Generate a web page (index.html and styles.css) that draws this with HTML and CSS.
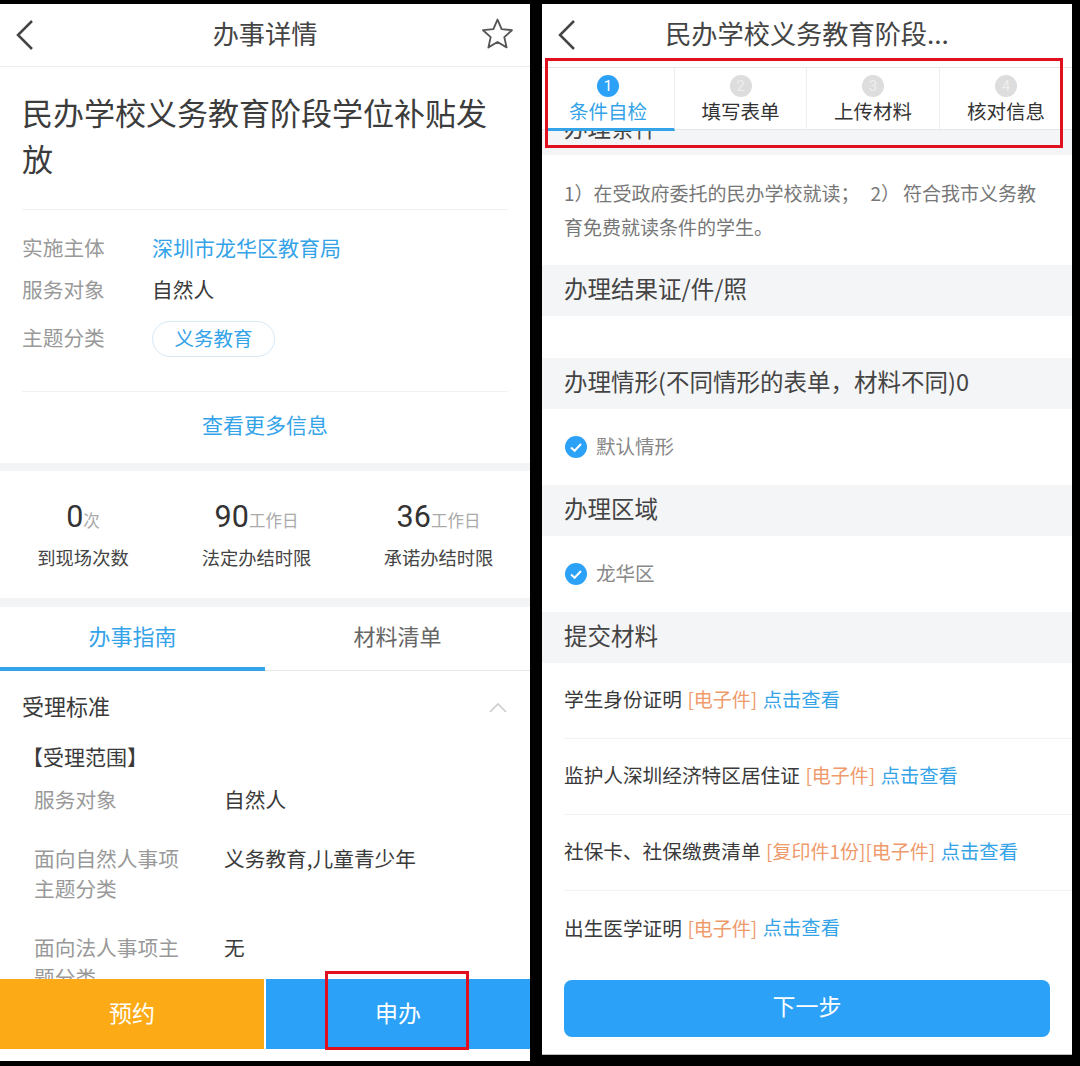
FILE: index.html
```html
<!DOCTYPE html>
<html lang="zh-CN">
<head>
  <meta charset="UTF-8">
  <meta name="viewport" content="width=device-width, initial-scale=1.0">
  <title>办事详情</title>
  <link rel="stylesheet" href="styles.css">
</head>
<body>
  <!-- Left screen -->
  <div class="phone phone-left">
    <div class="header">
      <svg class="back" viewBox="0 0 20 32"><path d="M17 2 L3 16 L17 30"/></svg>
      <h2 class="header-title">办事详情</h2>
      <svg class="star" viewBox="0 0 32 32"><path d="M16 2.5 L20 11.8 L30 12.8 L22.6 19.5 L24.8 29.5 L16 24.3 L7.2 29.5 L9.4 19.5 L2 12.8 L12 11.8 Z"/></svg>
    </div>

    <div class="content">
      <div class="intro">
        <h1 class="main-title">民办学校义务教育阶段学位补贴发放</h1>
        <div class="meta">
          <div class="meta-row"><span class="meta-label">实施主体</span><span class="link">深圳市龙华区教育局</span></div>
          <div class="meta-row"><span class="meta-label">服务对象</span><span>自然人</span></div>
          <div class="meta-row meta-row-tag"><span class="meta-label">主题分类</span><span class="tag">义务教育</span></div>
        </div>
        <div class="more link">查看更多信息</div>
      </div>

      <div class="stats">
        <div class="stat">
          <div class="stat-num">0<small>次</small></div>
          <div class="stat-label">到现场次数</div>
        </div>
        <div class="stat">
          <div class="stat-num">90<small>工作日</small></div>
          <div class="stat-label">法定办结时限</div>
        </div>
        <div class="stat">
          <div class="stat-num">36<small>工作日</small></div>
          <div class="stat-label">承诺办结时限</div>
        </div>
      </div>

      <div class="tabs">
        <div class="tab active">办事指南</div>
        <div class="tab">材料清单</div>
      </div>

      <div class="guide-head">
        <span>受理标准</span>
        <svg class="chevron" viewBox="0 0 20 12"><path d="M2 10 L10 2 L18 10"/></svg>
      </div>
      <div class="guide-sub">【受理范围】</div>
      <div class="guide-row"><div class="guide-label">服务对象</div><div>自然人</div></div>
      <div class="guide-row"><div class="guide-label">面向自然人事项主题分类</div><div>义务教育,儿童青少年</div></div>
      <div class="guide-row"><div class="guide-label">面向法人事项主题分类</div><div>无</div></div>
    </div>

    <div class="actions">
      <div class="action action-orange">预约</div>
      <div class="action action-blue">申办</div>
    </div>
    <div class="mark mark-apply"></div>
  </div>

  <!-- Right screen -->
  <div class="phone phone-right">
    <div class="header header-plain">
      <svg class="back" viewBox="0 0 20 32"><path d="M17 2 L3 16 L17 30"/></svg>
      <h2 class="header-title">民办学校义务教育阶段...</h2>
    </div>

    <div class="steps">
      <div class="step current"><span class="step-num">1</span><span>条件自检</span></div>
      <div class="step"><span class="step-num">2</span><span>填写表单</span></div>
      <div class="step"><span class="step-num">3</span><span>上传材料</span></div>
      <div class="step"><span class="step-num">4</span><span>核对信息</span></div>
    </div>

    <div class="section section-cut"><span>办理条件</span></div>
    <p class="condition">1）在受政府委托的民办学校就读；<span class="item-no">2）</span>符合我市义务教育免费就读条件的学生。</p>

    <div class="section">办理结果证/件/照</div>
    <div class="blank"></div>

    <div class="section">办理情形(不同情形的表单，材料不同)0</div>
    <div class="check-row">
      <svg class="check" viewBox="0 0 22 22"><circle cx="11" cy="11" r="11"/><path d="M6 11.5 L9.6 14.8 L16 8"/></svg>
      <span>默认情形</span>
    </div>

    <div class="section">办理区域</div>
    <div class="check-row">
      <svg class="check" viewBox="0 0 22 22"><circle cx="11" cy="11" r="11"/><path d="M6 11.5 L9.6 14.8 L16 8"/></svg>
      <span>龙华区</span>
    </div>

    <div class="section">提交材料</div>
    <div class="file-row"><span>学生身份证明</span><span class="file-tag">[电子件]</span><span class="link">点击查看</span></div>
    <div class="file-row"><span>监护人深圳经济特区居住证</span><span class="file-tag">[电子件]</span><span class="link">点击查看</span></div>
    <div class="file-row"><span>社保卡、社保缴费清单</span><span class="file-tag">[复印件1份][电子件]</span><span class="link">点击查看</span></div>
    <div class="file-row file-row-last"><span>出生医学证明</span><span class="file-tag">[电子件]</span><span class="link">点击查看</span></div>

    <div class="next">下一步</div>
    <div class="mark mark-steps"></div>
  </div>
</body>
</html>
```

FILE: styles.css
```css
* {
  box-sizing: border-box;
}

html, body {
  height: 100%;
}

body {
  margin: 0;
  padding: 4px 8px 0 0;
  background-color: #000;
  color: #3a3a3a;
  font-family: "Noto Sans CJK SC", "Noto Sans", sans-serif;
  font-size: 20.7px;
  display: flex;
  align-items: flex-start;
  gap: 12px;
  overflow: hidden;
}

h1, h2, p {
  margin: 0;
  font-weight: 400;
}

.phone {
  position: relative;
  width: 530px;
  background-color: #fff;
  display: flex;
  flex-direction: column;
  overflow: hidden;
}

.phone-left {
  height: 1057px;
}

.phone-right {
  height: 1051px;
  border-bottom: 1px solid #bbb;
}

.link {
  color: #35a3e8;
}

/* Header */
.header {
  height: 63px;
  flex: none;
  padding-bottom: 5px;
  display: flex;
  align-items: center;
  justify-content: center;
  position: relative;
  border-bottom: 1px solid #eee;
}

.header-plain {
  border-bottom: none;
}

.header-title {
  font-size: 26.2px;
  color: #444;
}

.back {
  position: absolute;
  left: 15px;
  top: 15px;
  width: 20px;
  height: 32px;
  fill: none;
  stroke: #444;
  stroke-width: 2.5;
}

.star {
  position: absolute;
  right: 16px;
  top: 13px;
  width: 33px;
  height: 33px;
  fill: none;
  stroke: #555;
  stroke-width: 1.8;
  stroke-linejoin: round;
}

/* Left screen */
.content {
  flex: 1;
  min-height: 0;
  overflow: hidden;
}

.intro {
  padding: 0 22px;
  height: 404px;
  border-bottom: 8px solid #f3f4f6;
}

.main-title {
  font-size: 31px;
  line-height: 46px;
  padding-top: 22px;
  height: 143px;
  color: #3c3c3c;
  border-bottom: 1px solid #f0f0f0;
}

.meta {
  height: 182px;
  padding-top: 16px;
  border-bottom: 1px solid #f2f2f2;
}

.meta-row {
  display: flex;
  align-items: center;
  height: 42px;
}

.meta-row-tag {
  height: 38px;
  margin-top: 10px;
}

.meta-label {
  width: 130px;
  color: #999;
}

.meta-row-tag .meta-label {
  margin-bottom: 4px;
}

.meta .link {
  font-size: 21px;
}

.tag {
  width: 123px;
  height: 36px;
  line-height: 31px;
  text-align: center;
  border: 1px solid #d5e9f7;
  border-radius: 18px;
  color: #35a3e8;
  font-size: 19.5px;
}

.more {
  text-align: center;
  font-size: 21px;
  line-height: 65px;
}

.stats {
  height: 136px;
  padding-top: 25px;
  display: grid;
  grid-template-columns: 166px 181px 183px;
  justify-items: center;
  align-items: start;
  text-align: center;
  border-bottom: 9px solid #f3f4f6;
}

.stat-num {
  font-family: "Roboto", sans-serif;
  font-size: 30.5px;
  line-height: 42px;
  color: #333;
}

.stat-num small {
  font-family: "Noto Sans CJK SC", sans-serif;
  font-size: 16.5px;
  color: #aaa;
}

.stat-label {
  margin-top: -1px;
  font-size: 18.3px;
  line-height: 34px;
  color: #444;
}

.tabs {
  height: 64px;
  display: flex;
  font-size: 22px;
  border-bottom: 1px solid #e6e6e6;
}

.tab {
  flex: 1;
  line-height: 57px;
  text-align: center;
  color: #666;
}

.tab.active {
  color: #35a3e8;
  border-bottom: 4px solid #35a3e8;
  height: 64px;
}

.guide-head {
  height: 68px;
  padding: 0 22px;
  display: flex;
  align-items: center;
  justify-content: space-between;
  font-size: 22px;
}

.chevron {
  width: 20px;
  height: 12px;
  margin-top: 6px;
  fill: none;
  stroke: #ccc;
  stroke-width: 1.6;
}

.guide-sub {
  padding-left: 22px;
  font-size: 21px;
  line-height: 30px;
  margin-top: 2px;
  margin-bottom: 13px;
}

.guide-row {
  display: flex;
  padding-left: 34px;
  line-height: 30px;
  margin-bottom: 29px;
}

.guide-label {
  width: 190px;
  flex: none;
  padding-right: 40px;
  color: #999;
}

.actions {
  height: 70px;
  flex: none;
  margin-bottom: 12px;
  display: flex;
  gap: 2px;
  color: #fff;
  font-size: 23px;
  line-height: 66px;
  text-align: center;
}

.action {
  flex: 1;
}

.action-orange {
  background-color: #fdaa17;
}

.action-blue {
  background-color: #2ba1f8;
}

/* Red marks drawn over the screens */
.mark {
  position: absolute;
  z-index: 2;
  border: 3px solid #e0101e;
}

.mark-apply {
  left: 325px;
  top: 967px;
  width: 144px;
  height: 79px;
}

.mark-steps {
  left: 3px;
  top: 54px;
  width: 518px;
  height: 90px;
}

/* Right screen */
.steps {
  height: 63px;
  flex: none;
  position: relative;
  z-index: 1;
  display: grid;
  grid-template-columns: 133px 132px 133px 132px;
  background-color: #fff;
  border-top: 1px solid #e6e6e6;
  border-bottom: 1px solid #e6e6e6;
}

.step {
  display: flex;
  flex-direction: column;
  align-items: center;
  padding-top: 7px;
  font-size: 19.5px;
  line-height: 28px;
  color: #333;
  border-right: 1px solid #eee;
}

.step:last-child {
  border-right: none;
}

.step.current {
  color: #35a3e8;
  border-bottom: 3px solid #35a3e8;
  height: 63px;
  margin-left: 6px;
  padding-right: 6px;
}

.step-num {
  width: 22px;
  height: 22px;
  line-height: 22px;
  border-radius: 50%;
  background-color: #ddd;
  color: #eee;
  font-size: 15px;
  text-align: center;
  font-family: "Roboto", sans-serif;
}

.step.current .step-num {
  background-color: #2ba1f8;
  color: #fff;
}

.section {
  height: 51px;
  flex: none;
  padding-left: 22px;
  background-color: #f4f5f7;
  font-size: 23.5px;
  line-height: 47px;
  color: #444;
}

.section-cut {
  height: 25px;
  overflow: hidden;
}

.section-cut span {
  display: block;
  margin-top: -26px;
}

.condition {
  height: 110px;
  flex: none;
  padding: 21px 22px 0;
  font-size: 19px;
  line-height: 34px;
  color: #777;
}

.item-no {
  margin: 0 3px 0 11px;
}

.blank {
  height: 42px;
  flex: none;
}

.check-row {
  height: 76px;
  flex: none;
  padding-left: 23px;
  display: flex;
  align-items: center;
  gap: 9px;
  font-size: 19.5px;
  color: #888;
}

.check-row span {
  margin-bottom: 4px;
}

.check {
  width: 22px;
  height: 22px;
}

.check circle {
  fill: #2ba1f8;
}

.check path {
  fill: none;
  stroke: #fff;
  stroke-width: 2;
}

.file-row {
  height: 76px;
  flex: none;
  margin-left: 22px;
  padding-bottom: 4px;
  display: flex;
  align-items: center;
  gap: 5.5px;
  font-size: 19.67px;
  color: #3a3a3a;
  border-bottom: 1px solid #f3f3f3;
}

.file-row-last {
  border-bottom: none;
}

.file-tag {
  color: #ef9a6b;
  font-size: 19px;
}

.file-row .link {
  font-size: 19.3px;
}

.next {
  margin: 13px 22px 0;
  height: 57px;
  flex: none;
  border-radius: 8px;
  background-color: #2ba1f8;
  color: #fff;
  font-size: 23px;
  line-height: 51px;
  text-align: center;
}
```
